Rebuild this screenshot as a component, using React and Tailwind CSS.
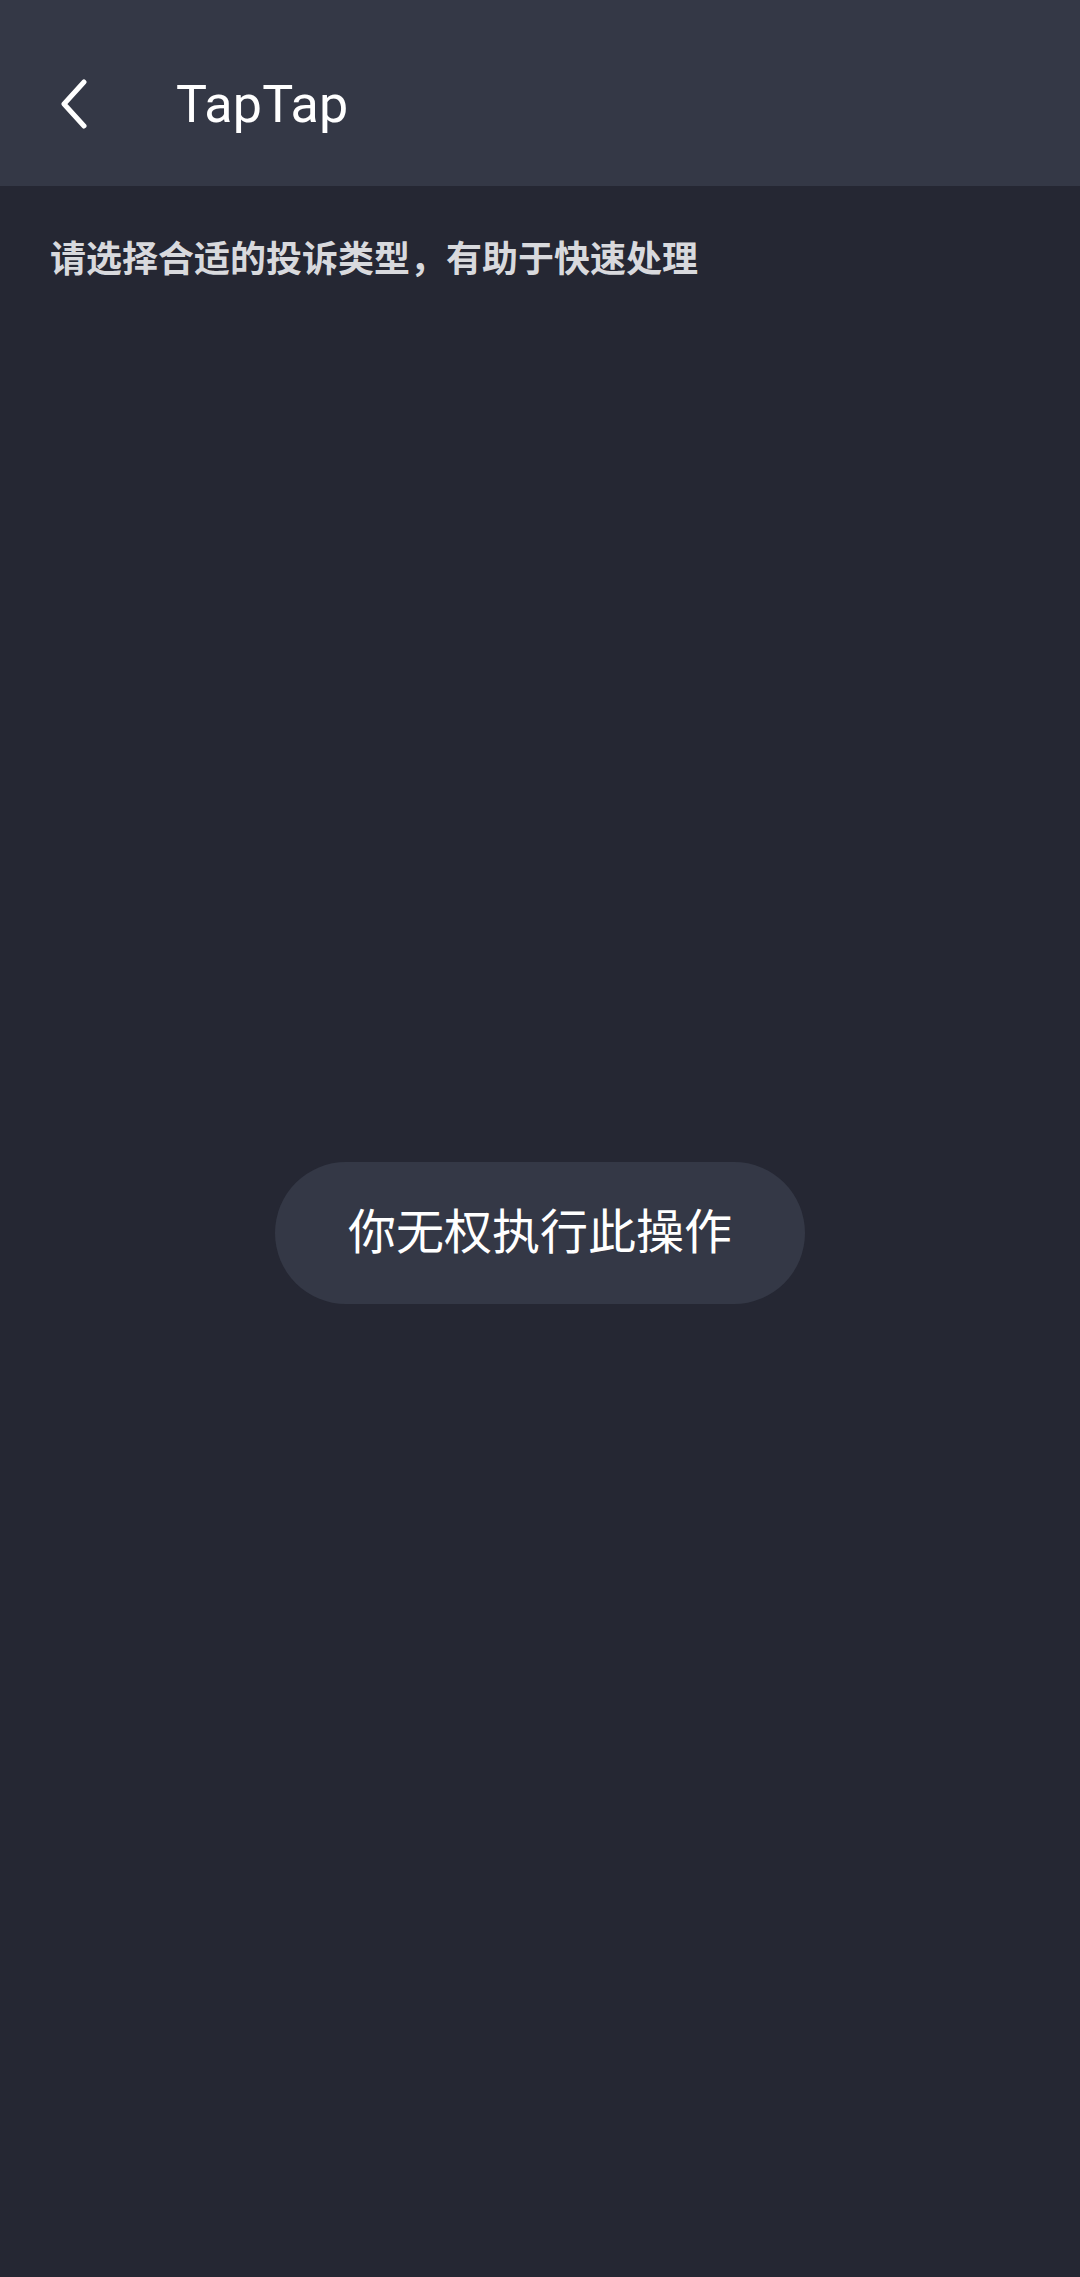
import React from 'react';

function BackIcon() {
  return (
    <svg width="30" height="50" viewBox="0 0 30 50" fill="none">
      <path d="M25 3 L5 25 L25 47" stroke="#ffffff" strokeWidth="5" strokeLinecap="round" strokeLinejoin="round" />
    </svg>
  );
}

export default function App() {
  return (
    <div
      className="w-[1080px] h-[2277px] bg-[#252733] flex flex-col"
      style={{ fontFamily: 'Roboto, "Noto Sans CJK SC", sans-serif' }}
    >
      {/* toolbar */}
      <div className="h-[186px] bg-[#343846] flex items-end">
        <div className="h-[148px] w-full flex items-center">
          <div className="w-[176px] pl-[59px] flex items-center pb-[16px]">
            <BackIcon />
          </div>
          <span className="text-[52px] leading-none text-white tracking-[0.2px] pb-[14px]">TapTap</span>
        </div>
      </div>

      <div className="px-[50px] pt-[56px]">
        <p className="text-[36px] leading-[36px] font-bold text-[#d8d9dd]">
          请选择合适的投诉类型，有助于快速处理
        </p>
      </div>

      {/* toast */}
      <div className="flex justify-center mt-[884px]">
        <div className="w-[530px] h-[142px] rounded-full bg-[#343846] flex items-center justify-center">
          <span className="text-[48px] leading-none text-white">你无权执行此操作</span>
        </div>
      </div>
    </div>
  );
}
